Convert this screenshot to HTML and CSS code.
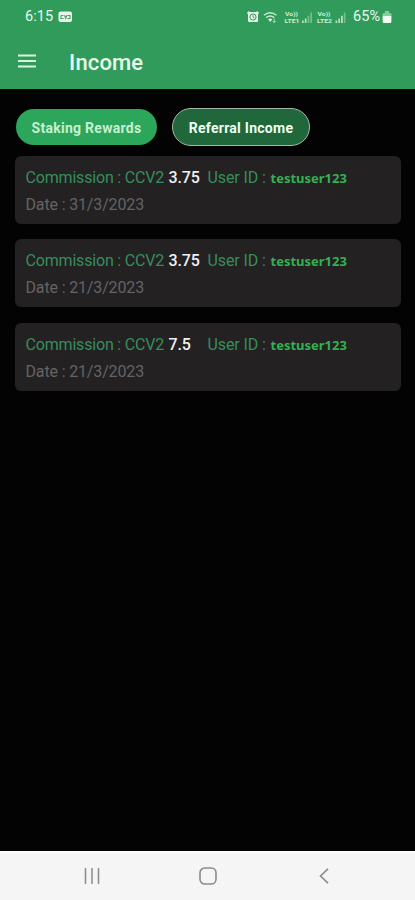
FILE: index.html
```
<!DOCTYPE html>
<html lang="en">
<head>
<meta charset="utf-8">
<meta name="viewport" content="width=device-width, initial-scale=1">
<title>Income</title>
<link rel="stylesheet" href="styles.css">
</head>
<body>
<div class="app">
  <header class="header">
    <div class="status">
      <span class="clock">6:15</span>
      <svg class="cast" width="15" height="12" viewBox="0 0 15 12"><rect x=".5" y=".5" width="13.5" height="10.5" rx="2" fill="#e6f7e9"/><path d="M3 4.5h2.5M3 4.5v3h2.5M6.5 4.3l1.2 3 1.2-3M9.5 4.5H12v3H9.5" fill="none" stroke="#4b9d67" stroke-width="1.1"/></svg>
      <svg class="signals" width="102" height="18" viewBox="0 0 102 18">
        <rect x="1" y="4" width="10" height="10" rx="1" fill="#e6f7e9"/><path d="M.3 5.500l2-2M11.700 5.500l-2-2" stroke="#e6f7e9" stroke-width="1.200"/>
        <circle cx="6" cy="9" r="3.1" fill="none" stroke="#319b5b"/><path d="M6 7v2.2l1.5.6" fill="none" stroke="#319b5b" stroke-width=".9"/>
        <g fill="none" stroke="#c9ebd0" stroke-width="1.4"><path d="M17 7.2q6-4.8 12.5 0M19.2 9.6q4-3.1 8 0"/></g>
        <path d="M21 11.2q2.2-1.6 4.4 0L23.2 14z" fill="#d5f0da"/><path d="M27.2 10.5v4M25.8 13l1.4 1.7 1.4-1.7" fill="none" stroke="#b9e2c3" stroke-width=".9"/>
        <g class="volte"><text x="38" y="8.2" textLength="13" lengthAdjust="spacingAndGlyphs">Vo))</text><text x="37.5" y="15.3" textLength="15" lengthAdjust="spacingAndGlyphs">LTE1</text><text x="70.5" y="8.2" textLength="13" lengthAdjust="spacingAndGlyphs">Vo))</text><text x="70" y="15.3" textLength="15" lengthAdjust="spacingAndGlyphs">LTE2</text></g>
        <g fill="#b5e1c0"><path d="M55 12.5h1.7V15H55zM57.8 10.5h1.7V15h-1.7zM88.5 12.5h1.7V15h-1.7zM91.3 10.5H93V15h-1.7zM94 7.8h1.8V15H94z"/><path d="M60.6 7.8h1.7V15h-1.7zM63.3 4.5H65V15h-1.7zM96.8 4.5h1.7V15h-1.7z" opacity=".5"/></g>
      </svg>
      <span class="percent">65%</span>
      <svg class="battery" width="10" height="14" viewBox="0 0 10 14"><path d="M3 1h4v2h1q1.5 0 1.5 1.5v7Q9.500 13 8 13H2Q.5 13 .5 11.500v-7Q.5 3 2 3h1z" fill="#8bcba0"/><path d="M.8 6h8.400v5.500Q9.200 13 7.800 13H2.200Q.8 13 .8 11.500z" fill="#f1fff3"/></svg>
    </div>
    <div class="titlebar">
      <svg class="menu" width="18" height="14" viewBox="0 0 18 14"><path d="M0 1.400h18M0 7h18M0 12.600h18" stroke="#d9f7df" stroke-width="2"/></svg>
      <h1>Income</h1>
    </div>
  </header>
  <main>
    <nav class="tabs">
      <button class="tab staking"><span>Staking Rewards</span></button>
      <button class="tab referral"><span>Referral Income</span></button>
    </nav>
    <section class="list">
      <article class="card">
        <div class="row"><span class="label">Commission : CCV2</span><span class="amount">3.75</span><span class="user">User ID :</span><b class="name">testuser123</b></div>
        <div class="date">Date : 31/3/2023</div>
      </article>
      <article class="card">
        <div class="row"><span class="label">Commission : CCV2</span><span class="amount">3.75</span><span class="user">User ID :</span><b class="name">testuser123</b></div>
        <div class="date">Date : 21/3/2023</div>
      </article>
      <article class="card">
        <div class="row"><span class="label">Commission : CCV2</span><span class="amount">7.5</span><span class="user">User ID :</span><b class="name">testuser123</b></div>
        <div class="date">Date : 21/3/2023</div>
      </article>
    </section>
  </main>
  <footer class="navbar">
    <svg width="16" height="16" viewBox="0 0 16 16"><path d="M1.500 0v16M8 0v16M14.500 0v16" stroke="#8b8b8b" stroke-width="1.500"/></svg>
    <svg width="18" height="18" viewBox="0 0 18 18"><rect x="1" y="1" width="16" height="16" rx="4.800" fill="none" stroke="#8b8b8b" stroke-width="1.600"/></svg>
    <svg width="10" height="16" viewBox="0 0 10 16"><path d="M9 .8L1.500 8 9 15.200" fill="none" stroke="#8b8b8b" stroke-width="1.600"/></svg>
  </footer>
</div>
</body>
</html>
```
FILE: styles.css
```
* { box-sizing: border-box; }
body { margin: 0; background: #030303; font-family: Roboto, "Liberation Sans", sans-serif; }
.app { height: 900px; display: flex; flex-direction: column; overflow: hidden; }
.header { height: 89px; flex: none; background: #319b5b; color: #e6fbe9; }
.status { height: 33px; display: flex; align-items: center; padding-left: 25px; }
.clock, .percent { font-size: 14.5px; line-height: 18px; letter-spacing: .1px; }
.clock { width: 33px; }
.signals { margin-left: 174px; }
.percent { margin-left: 4px; width: 29px; letter-spacing: .1px; }
.volte { fill: #d0eed6; font: bold 6px Roboto, sans-serif; }
.titlebar { height: 55px; display: flex; align-items: center; padding-left: 18px; }
h1 { margin: 4px 0 0 33px; font-size: 22px; line-height: 28px; font-weight: 500; letter-spacing: .15px; }
main { flex: 1; padding: 19px 14px 0 15px; }
.tabs { display: flex; align-items: center; gap: 15px; height: 38px; }
.tab { height: 36px; padding: 2px 0 0; border: 0; border-radius: 19px; font: 700 14px/20px Roboto, "Liberation Sans", sans-serif; letter-spacing: .27px; }
.staking { width: 141px; margin-left: 1px; background: #2ca65a; color: #c5f0cf; }
.referral { width: 138px; height: 38px; border: 1.5px solid #a5b8a7; background: #20683b; color: #effff1; }
.list { margin-top: 9.5px; display: flex; flex-direction: column; gap: 15.500px; }
.card { height: 68px; padding: 9px 10.500px 0; border-radius: 6px; background: #232122; }
.row { display: grid; grid-template-columns: 143px 39px 63px 1fr; height: 26px; align-items: center; font-size: 16px; line-height: 26px; white-space: nowrap; color: #368e5d; }
.label { letter-spacing: -.18px; }
.user { letter-spacing: -.1px; }
.amount { color: #f1eff0; font-weight: 500; letter-spacing: -.1px; }
.name { font: 700 13px/26px "Noto Sans", sans-serif; color: #33b052; }
.date { font-size: 16px; line-height: 27px; letter-spacing: -.15px; color: #656365; }
.navbar { height: 49px; flex: none; display: flex; align-items: center; padding: 0 0 1px 83.500px; border-top: 2px solid #fff; background: #f5f5f5; }
.navbar svg:nth-child(2) { margin: 0 102px 0 99.500px; }
```
